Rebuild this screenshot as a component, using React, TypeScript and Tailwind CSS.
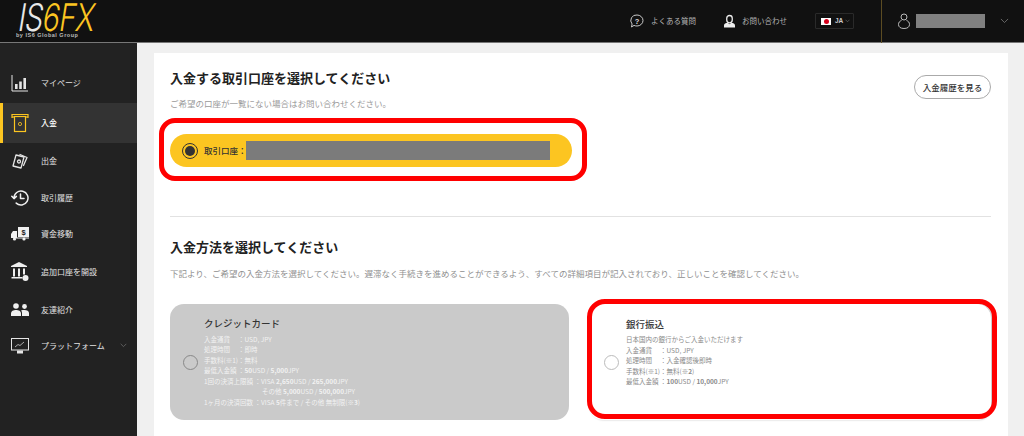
import React from "react";

const jp = { fontFamily: '"Noto Sans CJK JP", "Noto Sans", sans-serif' };

const C = ({ d, w = 1.3, c = "#e5e5e5" }: { d: React.ReactNode; w?: number; c?: string }) => (
  <svg width="18" height="18" viewBox="0 0 18 18" fill="none" stroke={c} strokeWidth={w} strokeLinecap="round" strokeLinejoin="round">
    {d}
  </svg>
);

const icons: Record<string, React.ReactNode> = {
  page: (
    <svg width="18" height="18" viewBox="0 0 18 18" fill="#e5e5e5">
      <path d="M1 1v16h16" fill="none" stroke="#e5e5e5" strokeWidth="1" />
      <rect x="4" y="10" width="2.6" height="5" />
      <rect x="8.2" y="7.5" width="2.6" height="7.5" />
      <rect x="12.4" y="4" width="2.6" height="11" />
    </svg>
  ),
  dep: (
    <svg width="18" height="20" viewBox="0 0 18 20" fill="none" stroke="#fcc521" strokeWidth="1.2">
      <path d="M1 5V1.500h16V5" />
      <path d="M1 4h16" />
      <rect x="3.500" y="3.500" width="11" height="15" fill="#333" />
      <circle cx="9" cy="11" r="1.6" strokeWidth="0.8" />
    </svg>
  ),
  wd: (
    <C
      d={
        <>
          <path d="M5 3l8 2-3 11-8-2z" />
          <path d="M9 2.500l7 3-3.500 8" />
          <circle cx="8" cy="9.500" r="1.500" />
        </>
      }
    />
  ),
  hist: (
    <C
      w={1.5}
      c="#f0f0f0"
      d={
        <>
          <path d="M3 9a7 7 0 1 1 2.200 5.100" />
          <path d="M.8 7.200L3 9.600l2.400-2.200" />
          <path d="M9.500 5v4.500H13" />
        </>
      }
    />
  ),
  move: (
    <svg width="18" height="14" viewBox="0 0 18 14" fill="#f0f0f0">
      <rect x="7" y="0" width="11" height="10" />
      <path d="M0 7l2-3h4v7H0z" />
      <circle cx="3.500" cy="12" r="1.600" />
      <circle cx="13" cy="12" r="1.600" />
      <rect x="5" y="10.500" width="13" height="1" />
      <text x="12.500" y="8" fontSize="7.500" fontWeight="700" textAnchor="middle" fill="#222" fontFamily="Liberation Sans">$</text>
    </svg>
  ),
  bank: (
    <svg width="18" height="20" viewBox="0 0 18 20" fill="#f0f0f0">
      <path d="M8 0l8 4v1H0V4z" />
      <rect x="2" y="6.500" width="2" height="8" />
      <rect x="7" y="6.500" width="2" height="8" />
      <rect x="12" y="6.500" width="2" height="6" />
      <rect x="0.500" y="15" width="11" height="1.500" />
      <circle cx="14.500" cy="16" r="3" />
    </svg>
  ),
  friend: (
    <svg width="18" height="13" viewBox="0 0 18 13" fill="#f0f0f0">
      <circle cx="5" cy="3" r="2.800" />
      <circle cx="13.500" cy="3.500" r="2.400" />
      <path d="M0 13v-2.500C0 8 2.500 7 5 7s5 1 5 3.500V13z" />
      <path d="M11 13v-3c0-1-.4-1.800-1-2.400 1-.5 2.300-.6 3.500-.6 2.300 0 4.500 1 4.500 3v3z" />
    </svg>
  ),
  plat: (
    <svg width="18" height="16" viewBox="0 0 18 16" fill="none" stroke="#e5e5e5" strokeWidth="1">
      <rect x="0.500" y="0.500" width="17" height="11.500" />
      <path d="M4 9l3-2.500 2 1L13 4" strokeWidth="0.700" />
      <rect x="6.500" y="13" width="5" height="2" fill="#e5e5e5" />
    </svg>
  ),
};

const nav: [string, string, string][] = [
  ["マイページ", "page", "h-[40px]"],
  ["入金", "dep", "h-[40px]"],
  ["出金", "wd", "h-[35px]"],
  ["取引履歴", "hist", "h-[40px]"],
  ["資金移動", "move", "h-[32px]"],
  ["追加口座を開設", "bank", "h-[44px]"],
  ["友達紹介", "friend", "h-[31px]"],
  ["プラットフォーム", "plat", "h-[41px]"],
];

const Chevron = ({ className = "", size = 8, color = "#8a8a8a" }: { className?: string; size?: number; color?: string }) => (
  <svg className={className} width={size} height={size / 2 + 1} viewBox="0 0 10 6" fill="none" stroke={color} strokeWidth="1">
    <path d="M1 1l4 4 4-4" />
  </svg>
);

function Row({ k, children, indent }: { k?: string; children: React.ReactNode; indent?: boolean }) {
  return (
    <div className="flex h-[10.5px] items-center whitespace-pre">
      {indent ? <span className="w-[58px]" /> : null}
      {k ? <span>{k}</span> : null}
      <span>{children}</span>
    </div>
  );
}

export default function App() {
  return (
    <div className="flex h-[436px] w-[1024px] flex-col overflow-hidden bg-[#f0f0f0]" style={jp}>
      <header className="flex h-[43px] shrink-0 items-center border-b border-[#777] bg-[#111]">
        <div className="relative ml-[16px] h-[42px] w-[90px]">
          <div className="mt-[-2px] flex h-[38px] w-[110px] origin-left -skew-x-12 scale-x-[0.76] items-center pl-[4px] text-[38px] font-light leading-none tracking-[-1px]" style={{ fontFamily: "Inter, sans-serif" }}>
            <span className="text-[#e8e8e8]">IS</span>
            <span className="text-[#fcc521]">6FX</span>
          </div>
          <div className="absolute left-0 top-[32px] text-[5.500px] font-bold leading-[6px] tracking-[0.5px] text-[#bbb]" style={{ fontFamily: "Liberation Sans, sans-serif" }}>
            by IS6 Global Group
          </div>
        </div>
        <div className="ml-auto flex items-center text-[7.500px] text-[#b5b5b5]">
          <svg width="14" height="14" viewBox="0 0 14 14" fill="none" stroke="#ddd" strokeWidth="0.900">
            <path d="M7 1a6 5.500 0 0 1 0 11c-1 0-2-.2-3-.6L1.500 13l.6-3A5.500 5.500 0 0 1 7 1z" />
            <text x="7" y="9.500" fontSize="7.500" fontWeight="700" fill="#ddd" stroke="none" textAnchor="middle" fontFamily="Liberation Sans">?</text>
          </svg>
          <span className="ml-[7px]">よくある質問</span>
          <svg className="ml-[28px]" width="11" height="14" viewBox="0 0 12 14" fill="#eee">
            <path d="M6 1a3 3 0 0 1 3 3v2a3 3 0 0 1-6 0V4a3 3 0 0 1 3-3z" fill="none" stroke="#eee" strokeWidth="1.400" />
            <path d="M0 14v-2c0-2 2-3 4-3l2 1.500L8 9c2 0 4 1 4 3v2z" />
          </svg>
          <span className="ml-[7px]">お問い合わせ</span>
          <div className="ml-[28px] flex h-[16px] w-[39px] items-center rounded-[1px] border border-[#2a2a2a] pl-[5px] text-[6.500px] font-bold text-[#ccc]">
            <span className="flex h-[7px] w-[10px] items-center justify-center bg-white">
              <span className="h-[5px] w-[5px] rounded-full bg-[#d6001c]" />
            </span>
            <span className="ml-[4px]" style={{ fontFamily: "Liberation Sans, sans-serif" }}>JA</span>
            <Chevron className="ml-[2px]" size={5} />
          </div>
        </div>
        <div className="ml-[27px] flex h-[43px] w-[143px] items-center border-l border-[#5c4c22] pl-[16px]">
          <svg width="12" height="16" viewBox="0 0 12 16" fill="none" stroke="#ccc" strokeWidth="0.900">
            <circle cx="6" cy="4" r="3" />
            <path d="M3.500 7.500C1.500 8.200.5 9.500.5 11.500c0 2.500 2 4 5.500 4s5.500-1.500 5.500-4c0-2-1-3.300-3-4" />
          </svg>
          <div className="ml-[6px] h-[14px] w-[69px] bg-[#808080]" />
          <Chevron className="ml-[15px]" size={9} color="#6f6f6f" />
        </div>
      </header>

      <div className="flex min-h-0 flex-1">
        <aside className="w-[137px] shrink-0 bg-[#222] pt-[20px]">
          {nav.map(([label, icon, h]) => {
            const active = label === "入金";
            return (
              <div key={label} className={`flex items-center text-[8px] ${h} ${active ? "border-l-[3px] border-[#fcc521] bg-[#333] pl-[8px] font-medium text-white" : "pl-[11px] text-[#e2e2e2]"}`}>
                <span className="flex w-[30px] items-center">{icons[icon]}</span>
                <span>{label}</span>
                {label === "プラットフォーム" ? <Chevron className="ml-[15px]" size={7} color="#777" /> : null}
              </div>
            );
          })}
        </aside>

        <main className="min-w-0 flex-1 pl-[17px] pt-[10px]">
          <div className="relative h-[400px] w-[854px] bg-white pl-[16px] pr-[17px] pt-[17px]">
            <div className="flex items-start justify-between">
              <div>
                <h2 className="text-[13px] font-bold leading-[16px] text-[#222]">入金する取引口座を選択してください</h2>
                <p className="mt-[11px] text-[8.500px] leading-[12px] text-[#9a9a9a]">ご希望の口座が一覧にない場合はお問い合わせください。</p>
              </div>
              <button className="mt-[5px] h-[24px] w-[77px] rounded-full border border-[#aaa] bg-white text-[8.500px] font-medium text-[#333]">入金履歴を見る</button>
            </div>
            <div className="mt-[25px] flex h-[33px] w-[402px] items-center rounded-full bg-[#fcc521] pl-[12px]">
              <span className="flex h-[16px] w-[16px] items-center justify-center rounded-full border border-[#333]">
                <span className="h-[10px] w-[10px] rounded-full bg-[#333]" />
              </span>
              <span className="ml-[6px] text-[8.500px] font-medium text-[#333]">取引口座：</span>
              <span className="ml-[-1px] h-[19px] w-[304px] bg-[#7b7b7b]" />
            </div>
            <div className="mt-[49px] h-px bg-[#e2e2e2]" />
            <h2 className="mt-[22px] text-[13px] font-bold leading-[16px] text-[#222]">入金方法を選択してください</h2>
            <p className="mt-[12px] text-[8.500px] leading-[12px] text-[#8f8f8f]">下記より、ご希望の入金方法を選択してください。遅滞なく手続きを進めることができるよう、すべての詳細項目が記入されており、正しいことを確認してください。</p>
            <div className="mt-[25px] flex gap-[20px]">
              <div className="flex h-[116px] w-[399px] items-center rounded-[14px] bg-[#cacaca] pl-[13px]">
                <span className="h-[15px] w-[15px] shrink-0 rounded-full border border-[#888]" />
                <div className="ml-[6px] mt-[1px] text-[6.500px] text-[#f2f2f2]">
                  <div className="mb-[4px] text-[9.500px] font-medium leading-[13px] text-[#333]">クレジットカード</div>
                  <Row k="入金通貨　 ：">USD, JPY</Row>
                  <Row k="処理時間　 ：">即時</Row>
                  <Row k="手数料(※1)：">無料</Row>
                  <Row k="最低入金額 ："><b>50</b>USD / <b>5,000</b>JPY</Row>
                  <Row k="1回の決済上限額 ：">VISA <b>2,650</b>USD / <b>265,000</b>JPY</Row>
                  <Row indent>その他 <b>5,000</b>USD / <b>500,000</b>JPY</Row>
                  <Row k="1ヶ月の決済回数 ：">VISA <b>5</b>件まで / その他 無制限(※<b>3</b>)</Row>
                </div>
              </div>
              <div className="flex h-[116px] w-[402px] items-center rounded-[14px] bg-white pl-[15px] shadow-[1px_0_2px_#bbb]">
                <span className="h-[15px] w-[15px] shrink-0 rounded-full border border-[#bbb]" />
                <div className="mb-[19px] ml-[7px] text-[6.500px] text-[#8a8a8a]">
                  <div className="mb-[4px] text-[9.500px] font-medium leading-[13px] text-[#333]">銀行振込</div>
                  <Row>日本国内の銀行からご入金いただけます</Row>
                  <Row k="入金通貨　 ：">USD, JPY</Row>
                  <Row k="処理時間　 ：">入金確認後即時</Row>
                  <Row k="手数料(※1)：">無料(※<b>2</b>)</Row>
                  <Row k="最低入金額 ："><b>100</b>USD / <b>10,000</b>JPY</Row>
                </div>
              </div>
            </div>
            <div className="pointer-events-none absolute left-[5px] top-[65px] h-[63px] w-[428px] rounded-[16px] border-[5px] border-[#ff0000]" />
            <div className="pointer-events-none absolute left-[433px] top-[246px] h-[120px] w-[410px] rounded-[18px] border-[5px] border-[#ff0000]" />
          </div>
        </main>
      </div>
    </div>
  );
}
